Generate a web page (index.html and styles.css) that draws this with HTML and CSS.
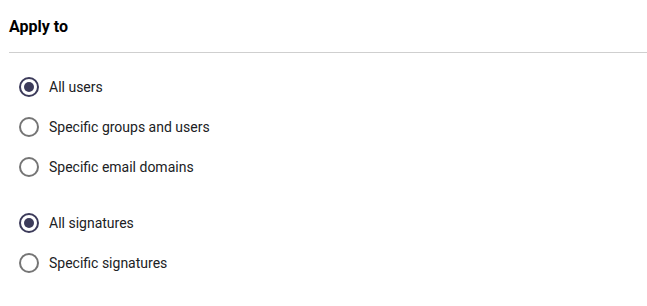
FILE: index.html
```html
<!DOCTYPE html>
<html lang="en">
<head>
    <meta charset="UTF-8">
    <meta name="viewport" content="width=device-width, initial-scale=1.0">
    <title>Apply to</title>
    <link rel="stylesheet" href="styles.css">
</head>
<body>
    <div class="panel">
        <h2 class="panel-title">Apply to</h2>
        <div class="options">
            <div class="group">
                <label class="option"><span class="radio checked"></span>All users</label>
                <label class="option"><span class="radio"></span>Specific groups and users</label>
                <label class="option"><span class="radio"></span>Specific email domains</label>
            </div>
            <div class="group">
                <label class="option"><span class="radio checked"></span>All signatures</label>
                <label class="option"><span class="radio"></span>Specific signatures</label>
            </div>
        </div>
    </div>
</body>
</html>
```

FILE: styles.css
```css
/* Reset */
* {
    margin: 0;
    padding: 0;
    box-sizing: border-box;
}

body {
    background: #fff;
    font-family: Roboto, 'Noto Sans', sans-serif;
    color: #202124;
}

.panel {
    padding-left: 9px;
}

/* Header with divider */
.panel-title {
    font-size: 16px;
    font-weight: 700;
    line-height: 20px;
    padding: 17px 0 15px;
    border-bottom: 1px solid #cfcfcf;
    color: #000;
}

.options {
    display: flex;
    flex-direction: column;
    gap: 16px;
    padding-top: 14px;
}

.option {
    display: flex;
    align-items: center;
    gap: 10px;
    height: 40px;
    padding-left: 10px;
    font-size: 14px;
    cursor: pointer;
}

/* Radio circle */
.radio {
    position: relative;
    width: 20px;
    height: 20px;
    border: 2px solid #757575;
    border-radius: 50%;
    flex-shrink: 0;
}

.radio.checked {
    border-color: #3c3b5a;
}

.radio.checked::after {
    content: '';
    position: absolute;
    top: 3px;
    left: 3px;
    width: 10px;
    height: 10px;
    border-radius: 50%;
    background: #3c3b5a;
}
```
